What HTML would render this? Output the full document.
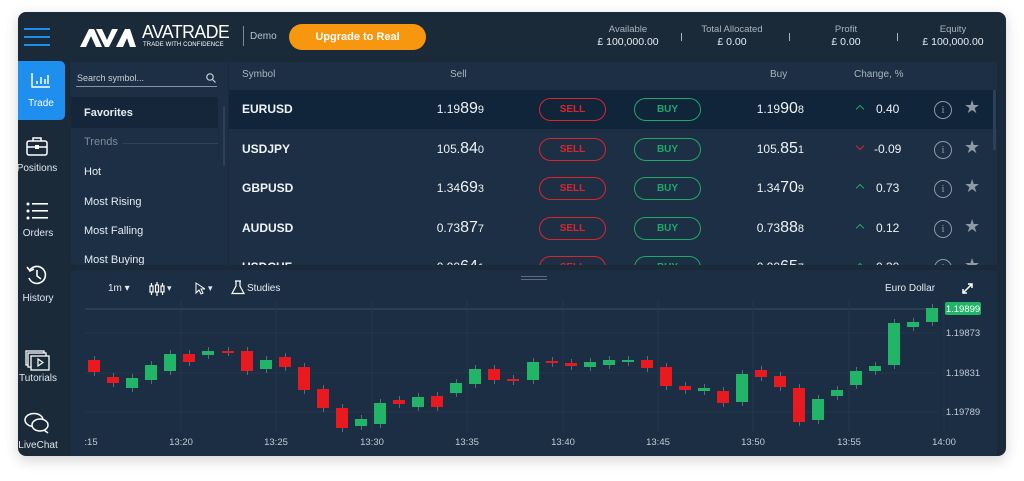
<!DOCTYPE html>
<html><head><meta charset="utf-8"><style>
*{margin:0;padding:0;box-sizing:border-box}
body{width:1024px;height:481px;background:#fff;font-family:"Liberation Sans",sans-serif;position:relative;overflow:hidden;color:#e6ecf2}
.a{position:absolute}
#frame{left:18px;top:12px;width:988px;height:444px;background:#1b2a39;border-radius:8px;box-shadow:0 4px 14px rgba(0,0,0,.18);overflow:hidden}
.t{font-size:11px;white-space:nowrap}
.sb{color:#dfe6ee;font-size:10px;text-align:center;width:52px}
.sym{font-size:12px;font-weight:bold;color:#f0f4f8}
.pill{width:67px;height:23px;border-radius:12px;font-size:10px;font-weight:bold;display:flex;align-items:center;justify-content:center}
.sell{border:1.5px solid #d8262e;color:#d8262e}
.buy{border:1.5px solid #1fa967;color:#1fa967}
.pr{font-size:12px;color:#eef2f6;text-align:right;width:90px}
.pr b{font-size:16px;font-weight:normal}
.pr i{font-style:normal;font-size:11px}
.ch{font-size:12px;color:#eef2f6}
.info{width:18px;height:18px;border:1.3px solid #8e9aa6;border-radius:50%;color:#8e9aa6;font-size:11px;text-align:center;line-height:16px;font-family:"Liberation Serif",serif}
.star{color:#8e9aa6;font-size:18px}
</style></head><body>
<div id="frame" class="a">
 <div class="a" style="left:6px;top:16px;width:26px;height:2px;background:#1e8fef"></div>
 <div class="a" style="left:6px;top:24px;width:26px;height:2px;background:#1e8fef"></div>
 <div class="a" style="left:6px;top:32px;width:26px;height:2px;background:#1e8fef"></div>
 <svg class="a" style="left:62px;top:14px" width="56" height="22" viewBox="0 0 56 22"><path d="M0 21L9 3h5l8 18h-6l-5-11-5 11z M16 3h6l5 11 5-11h6l-9 18h-4z M36 21l9-18h5l6 18h-6l-3-9-4 9z" fill="#fff"/></svg>
 <div class="a" style="left:124px;top:10px;font-size:18px;color:#fff;letter-spacing:-.5px;transform:scaleX(.98);transform-origin:left">AVATRADE</div>
 <div class="a" style="left:125px;top:30px;font-size:6px;color:#fff;letter-spacing:.1px">TRADE WITH CONFIDENCE</div>
 <div class="a" style="left:225px;top:14px;width:1px;height:20px;background:#7f8a96"></div>
 <div class="a t" style="left:232px;top:19px;font-size:10px;color:#b8c2cc">Demo</div>
 <div class="a" style="left:271px;top:12px;width:137px;height:26px;border-radius:13px;background:#f7960f;color:#fff;font-size:11px;font-weight:bold;text-align:center;line-height:26px">Upgrade to Real</div>
 <div class="a t" style="left:570px;top:12px;width:80px;text-align:center;font-size:9.5px;color:#aab4be">Available</div>
 <div class="a t" style="left:570px;top:24px;width:80px;text-align:center;font-size:10.5px">£ 100,000.00</div>
 <div class="a" style="left:663px;top:21px;width:1px;height:8px;background:#aab4be"></div>
 <div class="a t" style="left:674px;top:12px;width:80px;text-align:center;font-size:9.5px;color:#aab4be">Total Allocated</div>
 <div class="a t" style="left:674px;top:24px;width:80px;text-align:center;font-size:10.5px">£ 0.00</div>
 <div class="a" style="left:771px;top:21px;width:1px;height:8px;background:#aab4be"></div>
 <div class="a t" style="left:788px;top:12px;width:80px;text-align:center;font-size:9.5px;color:#aab4be">Profit</div>
 <div class="a t" style="left:788px;top:24px;width:80px;text-align:center;font-size:10.5px">£ 0.00</div>
 <div class="a" style="left:879px;top:21px;width:1px;height:8px;background:#aab4be"></div>
 <div class="a t" style="left:895px;top:12px;width:80px;text-align:center;font-size:9.5px;color:#aab4be">Equity</div>
 <div class="a t" style="left:889px;top:24px;width:92px;text-align:center;font-size:10.5px">£ 100,000.00</div>

 <div class="a" style="left:0;top:49px;width:47px;height:59px;background:#1e8fef;border-radius:0 5px 5px 0"></div>
 <svg class="a" style="left:13px;top:60px" width="20" height="16"><path d="M1 1v14h18" stroke="#fff" fill="none" stroke-width="1.5"/><path d="M6 12V9M10 12V5M14 12V7M17 12V3" stroke="#fff" stroke-width="1.5"/></svg>
 <div class="a sb" style="left:-3px;top:86px;color:#fff">Trade</div>
 <svg class="a" style="left:8px;top:124px" width="22" height="20"><rect x="1" y="5" width="20" height="14" rx="2" stroke="#fff" fill="none" stroke-width="1.5"/><path d="M7 5V2h8v3M1 11h20" stroke="#fff" fill="none" stroke-width="1.5"/><rect x="9" y="9" width="4" height="4" fill="#fff"/></svg>
 <div class="a sb" style="left:-7px;top:151px">Positions</div>
 <svg class="a" style="left:8px;top:190px" width="22" height="18"><g fill="#fff"><circle cx="2" cy="2" r="1.5"/><circle cx="2" cy="9" r="1.5"/><circle cx="2" cy="16" r="1.5"/><rect x="6" y="1" width="16" height="1.6"/><rect x="6" y="8" width="16" height="1.6"/><rect x="6" y="15" width="16" height="1.6"/></g></svg>
 <div class="a sb" style="left:-6px;top:216px">Orders</div>
 <svg class="a" style="left:8px;top:252px" width="22" height="22"><path d="M4 6A8.5 8.5 0 1 1 3 14" stroke="#fff" fill="none" stroke-width="1.6"/><path d="M1 3l3 4 4-2" stroke="#fff" fill="none" stroke-width="1.6"/><path d="M11 6v6l4 3" stroke="#fff" fill="none" stroke-width="1.6"/></svg>
 <div class="a sb" style="left:-6px;top:281px">History</div>
 <svg class="a" style="left:7px;top:338px" width="26" height="22"><rect x="1" y="1" width="18" height="14" stroke="#fff" fill="#1b2a39" stroke-width="1.3"/><rect x="3" y="3" width="18" height="14" stroke="#fff" fill="#1b2a39" stroke-width="1.3"/><rect x="6" y="6" width="18" height="14" stroke="#fff" fill="#1b2a39" stroke-width="1.3"/><path d="M13 9v7l5-3.5z" stroke="#fff" fill="none" stroke-width="1.2"/></svg>
 <div class="a sb" style="left:-6px;top:361px">Tutorials</div>
 <svg class="a" style="left:6px;top:400px" width="26" height="22"><ellipse cx="10" cy="8" rx="9" ry="6.5" stroke="#fff" fill="#1b2a39" stroke-width="1.5"/><ellipse cx="16" cy="13" rx="8" ry="6" stroke="#fff" fill="#1b2a39" stroke-width="1.5"/><path d="M20 18l4 3" stroke="#fff" stroke-width="1.5"/></svg>
 <div class="a sb" style="left:-6px;top:428px">LiveChat</div>

 <div class="a" style="left:53px;top:50px;width:157px;height:203px;background:#1c2f44;border-radius:0 0 4px 4px;overflow:hidden">
  <div class="a t" style="left:6px;top:11px;font-size:9px;color:#c7d0d9">Search symbol...</div>
  <svg class="a" style="left:135px;top:11px" width="10" height="10"><circle cx="4" cy="4" r="3.2" stroke="#c7d0d9" fill="none" stroke-width="1.2"/><path d="M6.5 6.5L9.5 9.5" stroke="#c7d0d9" stroke-width="1.2"/></svg>
  <div class="a" style="left:5px;top:24px;width:141px;height:1px;background:#8594a3"></div>
  <div class="a" style="left:0;top:35px;width:147px;height:31px;background:#15263a"></div>
  <div class="a" style="left:152px;top:44px;width:2px;height:60px;background:#2c4058"></div>
  <div class="a t" style="left:13px;top:45px;font-weight:bold">Favorites</div>
  <div class="a t" style="left:13px;top:74px;color:#7e8c9a">Trends</div>
  <div class="a" style="left:52px;top:81px;width:95px;height:1px;background:#2f4256"></div>
  <div class="a t" style="left:13px;top:104px">Hot</div>
  <div class="a t" style="left:13px;top:134px">Most Rising</div>
  <div class="a t" style="left:13px;top:163px">Most Falling</div>
  <div class="a t" style="left:13px;top:192px">Most Buying</div>
 </div>

 <div class="a" style="left:211px;top:50px;width:768px;height:203px;background:#1c2f44;overflow:hidden">
  <div class="a t" style="left:13px;top:7px;font-size:10px;color:#aab4be">Symbol</div>
  <div class="a t" style="left:221px;top:7px;font-size:10px;color:#aab4be">Sell</div>
  <div class="a t" style="left:541px;top:7px;font-size:10px;color:#aab4be">Buy</div>
  <div class="a t" style="left:625px;top:7px;font-size:10px;color:#aab4be">Change, %</div>
  <div class="a" style="left:0;top:28px;width:768px;height:39px;background:#10243a"></div>
  <div class="a" style="left:764px;top:28px;width:3px;height:60px;background:#2c4058"></div>
 </div>
 <div id="rows"></div>

 <div class="a" style="left:53px;top:258px;width:926px;height:186px;background:#1b2e43;border-radius:4px 4px 0 0"></div>
 <div class="a" style="left:503px;top:264px;width:26px;height:1px;background:#5d6d7d"></div>
 <div class="a" style="left:503px;top:267px;width:26px;height:1px;background:#5d6d7d"></div>
 <div class="a t" style="left:90px;top:271px;font-size:10px">1m ▾</div>
 <svg class="a" style="left:131px;top:270px" width="16" height="14"><g stroke="#fff" fill="none" stroke-width="1.2"><rect x="1" y="4" width="3" height="6"/><rect x="6.5" y="3" width="3" height="7"/><rect x="12" y="4" width="3" height="6"/><path d="M2.5 1v3M2.5 10v3M8 0v3M8 10v4M13.5 1v3M13.5 10v3"/></g></svg>
 <div class="a t" style="left:149px;top:271px;font-size:9px">▾</div>
 <svg class="a" style="left:177px;top:270px" width="10" height="13"><path d="M1 1v10l3-3 2 4 2-1-2-4h4z" stroke="#fff" fill="none" stroke-width="1"/></svg>
 <div class="a t" style="left:190px;top:271px;font-size:9px">▾</div>
 <svg class="a" style="left:213px;top:268px" width="14" height="15"><path d="M4 1h6M5 1v5L1 13.5h12L9 6V1" stroke="#fff" fill="none" stroke-width="1.2"/></svg>
 <div class="a t" style="left:229px;top:271px;font-size:10px">Studies</div>
 <div class="a t" style="left:867px;top:271px;font-size:10px">Euro Dollar</div>
 <svg class="a" style="left:944px;top:271px" width="11" height="11"><path d="M1 10L10 1M6 1h4v4M1 6v4h4" stroke="#fff" fill="none" stroke-width="1.5"/></svg>

 <svg class="a" style="left:0;top:0" width="988" height="444">
  <line x1="67" y1="297" x2="920" y2="297" stroke="#3b4f64" stroke-width="1"/>
  <g stroke="#243649" stroke-width="1">
   <line x1="67" y1="321" x2="920" y2="321"/><line x1="67" y1="361" x2="920" y2="361"/><line x1="67" y1="400" x2="920" y2="400"/>
   <line x1="163" y1="288" x2="163" y2="420"/><line x1="258" y1="288" x2="258" y2="420"/><line x1="354" y1="288" x2="354" y2="420"/><line x1="449" y1="288" x2="449" y2="420"/><line x1="545" y1="288" x2="545" y2="420"/><line x1="640" y1="288" x2="640" y2="420"/><line x1="735" y1="288" x2="735" y2="420"/><line x1="831" y1="288" x2="831" y2="420"/><line x1="926" y1="288" x2="926" y2="420"/>
  </g>
  <g id="cnd"></g>
  <rect x="927" y="290" width="36" height="13" rx="2" fill="#22b567"/>
  <text x="945" y="300" fill="#fff" font-size="9.5" text-anchor="middle" font-family="Liberation Sans">1.19899</text>
  <g fill="#c2cbd4" font-size="9.5" font-family="Liberation Sans" text-anchor="middle">
   <text x="945" y="324">1.19873</text><text x="945" y="364">1.19831</text><text x="945" y="403">1.19789</text>
   <text x="73" y="433">:15</text><text x="163" y="433">13:20</text><text x="258" y="433">13:25</text><text x="354" y="433">13:30</text><text x="449" y="433">13:35</text><text x="545" y="433">13:40</text><text x="640" y="433">13:45</text><text x="735" y="433">13:50</text><text x="831" y="433">13:55</text><text x="926" y="433">14:00</text>
  </g>
 </svg>
</div>
<script>
var rows=[["EURUSD","1.19","89","9","1.19","90","8","up","0.40"],["USDJPY","105.","84","0","105.","85","1","dn","-0.09"],["GBPUSD","1.34","69","3","1.34","70","9","up","0.73"],["AUDUSD","0.73","87","7","0.73","88","8","up","0.12"],["USDCHF","0.90","64","1","0.90","65","7","up","0.30"]];
var h="";rows.forEach(function(r,i){var y=Math.round(97+i*39.5-12-6);
h+='<div class="a" style="left:211px;top:'+(y)+'px;width:768px;height:39px;overflow:hidden;'+(i==4?'height:'+(253-y)+'px':'')+'"><div class="a sym" style="left:13px;top:11px">'+r[0]+'</div>'+
'<div class="a pr" style="left:165px;top:9px">'+r[1]+'<b>'+r[2]+'</b><i>'+r[3]+'</i></div>'+
'<div class="a pill sell" style="left:310px;top:7px">SELL</div><div class="a pill buy" style="left:405px;top:7px">BUY</div>'+
'<div class="a pr" style="left:485px;top:9px">'+r[4]+'<b>'+r[5]+'</b><i>'+r[6]+'</i></div>'+
'<div class="a" style="left:628px;top:'+(r[7]=="up"?15:12)+'px;width:6px;height:6px;border-left:1.5px solid '+(r[7]=="up"?'#1fa967':'#d8262e')+';border-top:1.5px solid '+(r[7]=="up"?'#1fa967':'#d8262e')+';transform:rotate('+(r[7]=="up"?45:225)+'deg)"></div>'+
'<div class="a ch" style="left:'+(r[8][0]=="-"?645:647)+'px;top:11px">'+r[8]+'</div>'+
'<div class="a info" style="left:705px;top:10px">i</div><div class="a star" style="left:735px;top:6px">★</div></div>';});
document.getElementById("rows").innerHTML=h;
var c=[[94,360,372,0],[113,377,383,0],[132,378,388,1],[151,365,380,1],[170,354,371,1],[189,354,362,0],[208,351,355,1],[228,351,352,0],[247,351,371,0],[266,360,369,1],[285,357,367,0],[304,367,390,0],[323,389,408,0],[342,408,428,0],[361,419,426,1],[380,403,424,1],[399,400,404,0],[418,397,407,1],[437,396,407,0],[456,383,393,1],[475,369,384,1],[494,369,380,0],[513,379,381,0],[533,362,380,1],[552,361,363,0],[571,363,366,0],[590,362,367,1],[609,360,365,1],[628,360,362,1],[647,360,368,0],[666,367,386,0],[685,386,390,0],[704,388,391,1],[723,391,403,0],[742,374,402,1],[761,370,377,0],[780,376,387,0],[799,388,422,0],[818,399,420,1],[837,390,396,1],[856,371,385,1],[875,366,371,1],[894,323,365,1],[913,322,327,1],[932,308,322,1]];
var s="";c.forEach(function(k){var x=k[0]-18,col=k[3]?"#22b567":"#e8191f";s+='<line x1="'+(x+.5)+'" y1="'+(k[1]-16)+'" x2="'+(x+.5)+'" y2="'+(k[2]-8)+'" stroke="#5b6b7b"/><rect x="'+(x-6)+'" y="'+(k[1]-12)+'" width="12" height="'+Math.max(2,k[2]-k[1])+'" fill="'+col+'"/>';});
document.getElementById("cnd").innerHTML=s;
</script>
</body></html>
